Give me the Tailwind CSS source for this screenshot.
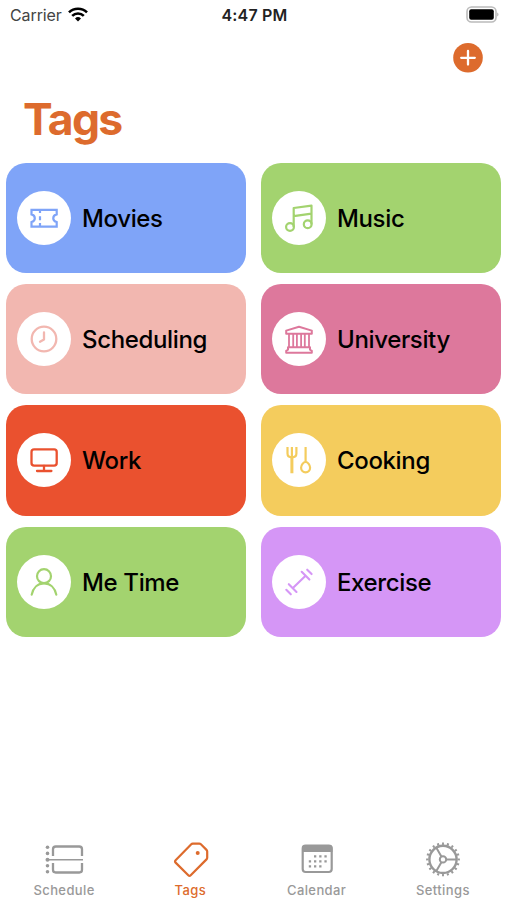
<!DOCTYPE html>
<html lang="en">
<head>
    <meta charset="UTF-8">
    <meta name="viewport" content="width=device-width, initial-scale=1.0">
    <title>Tags</title>
    <script src="https://cdn.jsdelivr.net/npm/@tailwindcss/browser@4"></script>
</head>
<body class="bg-white font-['Inter',sans-serif] text-black">
    <div class="flex flex-col w-[507px] h-[900px] overflow-hidden">

        <!-- status bar -->
        <header class="grid grid-cols-3 items-center h-[29px] pl-2.5 pr-2 text-base leading-none">
            <div class="flex items-center gap-1.5">
                <span class="text-[#444] tracking-[-0.1px]">Carrier</span>
                <svg class="w-5 h-[15px]" viewBox="0 0 20 15" fill="none" stroke="#000" stroke-width="2.6">
                    <path d="M1 5.4a12.8 12.8 0 0 1 18 0"/>
                    <path d="M4.2 8.9a8.2 8.2 0 0 1 11.6 0"/>
                    <path d="M10 14.6l-3-3.1a4.3 4.3 0 0 1 6 0z" fill="#000" stroke="none"/>
                </svg>
            </div>
            <span class="text-center font-semibold text-[#222] tracking-[0.2px]">4:47 PM</span>
            <svg class="justify-self-end w-[33px] h-[17px]" viewBox="0 0 33 17">
                <rect x="1" y="1" width="29" height="15" rx="4.5" fill="#fff" stroke="#bbb" stroke-width="1.6"/>
                <rect x="3.2" y="3.2" width="24.6" height="10.6" rx="2" fill="#000"/>
                <path d="M31.3 6.5c1.5.6 1.5 3.4 0 4z" fill="#aaa"/>
            </svg>
        </header>

        <div class="flex justify-end pt-[14px] pr-[24.5px]">
            <button class="block" aria-label="Add tag">
                <svg class="block w-[30px] h-[30px]" viewBox="0 0 30 30">
                    <circle cx="15" cy="14.8" r="14.8" fill="#dd6b2d"/>
                    <path d="M15 8v13.6M8.2 14.8h13.6" stroke="#fff" stroke-width="2.3" stroke-linecap="round"/>
                </svg>
            </button>
        </div>

        <h1 class="h-[89.5px] pt-[22px] pl-[23px] text-[44.5px] leading-[48px] font-bold tracking-[-1.7px] text-[#dd6b2d]">Tags</h1>

        <main class="grid grid-cols-2 gap-x-[15px] gap-y-[11px] pl-[6.4px] pr-[5.6px] text-2xl font-medium tracking-[-0.35px]">
            <div class="flex items-center gap-[11px] h-[110.4px] pl-[10.6px] rounded-[20px] bg-[#7fa4f8] text-[#7fa4f8]">
                <svg class="w-[54px] h-[54px] rounded-full bg-white" viewBox="0 0 54 54" fill="none" stroke="currentColor" stroke-width="2.2">
                    <path d="M14.5 18.8h25.2v4.6c-4.6 1.2-4.6 6.4 0 7.6v4.6H14.5V31c4.4-1.2 4.4-6.4 0-7.6z"/>
                    <path d="M23 19v3M23 25.2v4M23 32v3"/>
                </svg>
                <span class="pt-[2px] text-black">Movies</span>
            </div>
            <div class="flex items-center gap-[11px] h-[110.4px] pl-[10.6px] rounded-[20px] bg-[#a3d36f] text-[#a3d36f]">
                <svg class="w-[54px] h-[54px] rounded-full bg-white" viewBox="0 0 54 54" fill="none" stroke="currentColor" stroke-width="2.2" stroke-linejoin="round">
                    <circle cx="18" cy="36" r="3.9"/>
                    <circle cx="35.7" cy="33.3" r="3.9"/>
                    <path d="M21.7 36V17l17.8-2.4v18.6M21.7 25.2l17.8-2.6"/>
                </svg>
                <span class="pt-[2px] text-black">Music</span>
            </div>
            <div class="flex items-center gap-[11px] h-[110.4px] pl-[10.6px] rounded-[20px] bg-[#f2b7b0] text-[#f2b7b0]">
                <svg class="w-[54px] h-[54px] rounded-full bg-white" viewBox="0 0 54 54" fill="none" stroke="currentColor" stroke-width="2.3" stroke-linecap="round" stroke-linejoin="round">
                    <circle cx="27" cy="27" r="12.3"/>
                    <path d="M27 20.5v7l-4 2.3"/>
                </svg>
                <span class="pt-[2px] text-black">Scheduling</span>
            </div>
            <div class="flex items-center gap-[11px] h-[110.4px] pl-[10.6px] rounded-[20px] bg-[#dd789c] text-[#dd789c]">
                <svg class="w-[54px] h-[54px] rounded-full bg-white" viewBox="0 0 54 54" fill="none" stroke="currentColor" stroke-width="2" stroke-linejoin="round">
                    <path d="M27 14.8l12.8 3.8v3.2H14.2v-3.2zM16 35.2h22v2.4l1.8 1.2v2H14.2v-2l1.8-1.2z"/>
                    <path d="M17 21.8v13.4M21.2 21.8v13.4M24.9 21.8v13.4M29.1 21.8v13.4M32.8 21.8v13.4M37 21.8v13.4" stroke-width="1.8"/>
                </svg>
                <span class="pt-[2px] text-black">University</span>
            </div>
            <div class="flex items-center gap-[11px] h-[110.4px] pl-[10.6px] rounded-[20px] bg-[#ea512f] text-[#ea512f]">
                <svg class="w-[54px] h-[54px] rounded-full bg-white" viewBox="0 0 54 54" fill="none" stroke="currentColor" stroke-width="2.3" stroke-linecap="round">
                    <rect x="14.5" y="16.3" width="25.2" height="16.4" rx="2.6"/>
                    <path d="M27 33v5M20 38h14.4"/>
                </svg>
                <span class="pt-[2px] text-black">Work</span>
            </div>
            <div class="flex items-center gap-[11px] h-[110.4px] pl-[10.6px] rounded-[20px] bg-[#f4cc5d] text-[#f4cc5d]">
                <svg class="w-[54px] h-[54px] rounded-full bg-white" viewBox="0 0 54 54" fill="none" stroke="currentColor" stroke-width="2.2" stroke-linejoin="round">
                    <path d="M15.5 14v6.6c0 2.7 1.6 3.8 4.4 3.8s4.5-1.1 4.5-3.8V14M19.9 14v10M33.6 14v15"/>
                    <path d="M19.9 24v16.3" stroke-width="3"/>
                    <path d="M33.6 29c2.2 0 4.5 3 4.5 5.8 0 2.7-1.9 4.5-4.5 4.5s-4.5-1.8-4.5-4.5c0-2.8 2.3-5.8 4.5-5.8z"/>
                </svg>
                <span class="pt-[2px] text-black">Cooking</span>
            </div>
            <div class="flex items-center gap-[11px] h-[110.4px] pl-[10.6px] rounded-[20px] bg-[#a3d36f] text-[#a3d36f]">
                <svg class="w-[54px] h-[54px] rounded-full bg-white" viewBox="0 0 54 54" fill="none" stroke="currentColor" stroke-width="2.2" stroke-linecap="round">
                    <circle cx="27" cy="21.2" r="7"/>
                    <path d="M14.7 39.6c1.4-6.8 6-11.2 12.3-11.2s10.9 4.4 12.3 11.2"/>
                </svg>
                <span class="pt-[2px] text-black">Me Time</span>
            </div>
            <div class="flex items-center gap-[11px] h-[110.4px] pl-[10.6px] rounded-[20px] bg-[#d596f6] text-[#d596f6]">
                <svg class="w-[54px] h-[54px] rounded-full bg-white" viewBox="0 0 54 54" fill="none" stroke="currentColor" stroke-width="2.1" stroke-linecap="round">
                    <path d="M20.9 33.1L33.3 20.9M16.8 29.2l7.7 7.8M14.3 34.8l4.5 4.5M29.7 16.8l7.7 7.8M35.2 14.7l4.4 4.4"/>
                </svg>
                <span class="pt-[2px] text-black">Exercise</span>
            </div>
        </main>

        <!-- tab bar -->
        <nav class="grid grid-cols-4 mt-auto h-[60px] px-px text-[13px] leading-4 font-medium tracking-[0.4px] text-[#999]">
            <a class="flex flex-col items-center gap-[2px]">
                <svg class="w-11 h-10" viewBox="0 0 44 40" fill="none" stroke="currentColor" stroke-width="2.3">
                    <path d="M11 16V9.2q0-2.7 2.7-2.7h23.6q2.7 0 2.7 2.7V16M11 23v6.8q0 2.7 2.7 2.7h23.6q2.7 0 2.7-2.7V23"/>
                    <path d="M6 19.7h35" stroke-width="1.6"/>
                    <g fill="currentColor" stroke="none">
                        <circle cx="5.5" cy="7.3" r="1.8"/>
                        <circle cx="5.5" cy="13.4" r="1.8"/>
                        <circle cx="5.5" cy="19.7" r="2"/>
                        <circle cx="5.5" cy="25.7" r="1.8"/>
                        <circle cx="5.5" cy="31.8" r="1.8"/>
                    </g>
                </svg>
                <span>Schedule</span>
            </a>
            <a class="flex flex-col items-center gap-[2px] text-[#dd6b2d]">
                <svg class="w-11 h-10" viewBox="0 0 44 40" fill="none" stroke="currentColor" stroke-width="2.2" stroke-linejoin="round">
                    <path d="M24.8 3.6h6.4q1 0 1.7.7l5.6 5.600q.7.7.7 1.700v6.100q0 1-.7 1.700L22.700 35.200q-1.200 1.200-2.400 0L7.600 22.600q-1.200-1.200 0-2.400L23 4.400q.8-.8 1.800-.8z"/>
                    <circle cx="29.7" cy="13" r="2" fill="currentColor" stroke="none"/>
                </svg>
                <span>Tags</span>
            </a>
            <a class="flex flex-col items-center gap-[2px]">
                <svg class="w-11 h-10" viewBox="0 0 44 40" fill="currentColor">
                    <rect x="7.7" y="5.7" width="29" height="26.3" rx="3" fill="none" stroke="currentColor" stroke-width="2.2"/>
                    <path d="M7 12V8q0-3 3-3h24.5q3 0 3 3v4z"/>
                    <path d="M19 16.4h13.5M13.8 21.4h18.7M13.8 26.4h13.5" fill="none" stroke="currentColor" stroke-width="2.3" stroke-dasharray="2.3 2.9"/>
                </svg>
                <span>Calendar</span>
            </a>
            <a class="flex flex-col items-center gap-[2px]">
                <svg class="w-11 h-10" viewBox="0 0 44 40" fill="none" stroke="currentColor" stroke-width="2">
                    <circle cx="22" cy="19.4" r="13.6" stroke-width="2.4"/>
                    <circle cx="22" cy="19.4" r="15.7" stroke-width="2.4" pathLength="200" stroke-dasharray="4 6" stroke-dashoffset="2"/>
                    <circle cx="22" cy="19.4" r="3.2"/>
                    <path d="M25.2 19.4h10.5M20.4 16.6l-5.2-9M20.4 22.2l-5.2 9"/>
                </svg>
                <span>Settings</span>
            </a>
        </nav>
    </div>
</body>
</html>
